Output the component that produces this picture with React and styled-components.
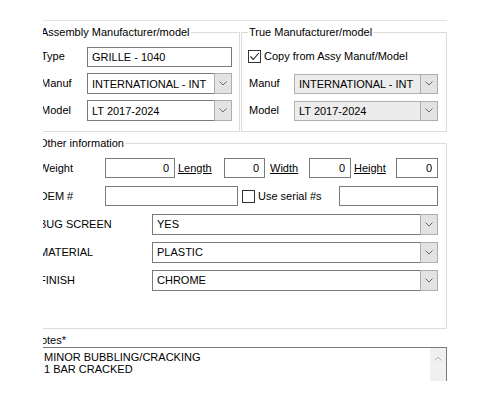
import React from "react";
import styled, { createGlobalStyle } from "styled-components";

const GlobalStyle = createGlobalStyle`
  html, body { margin: 0; padding: 0; background: #fff; }
  body {
    font-family: "Liberation Sans", Arial, sans-serif;
    font-size: 11px;
    color: #000;
  }
  *, *::before, *::after { box-sizing: border-box; }
`;

const Page = styled.div`
  width: 500px;
  height: 400px;
  padding: 20px 0 0 43px;
  background: #fff;
  overflow: hidden;
`;

const Frame = styled.div`
  width: 404px;
  height: 361px;
  overflow: hidden;
  border-top: 1px solid #e3e3e3;
`;

const Content = styled.div`
  margin-left: -5px;
  width: 409px;
`;

const GroupRow = styled.div`
  display: flex;
  gap: 1px;
  margin-top: 5px;
`;

const Group = styled.fieldset`
  margin: ${(p) => p.$mt || 0}px 0 0 0;
  padding: 4px 0 ${(p) => p.$pb}px ${(p) => p.$pl}px;
  border: 1px solid #dcdcdc;
  width: ${(p) => p.$w}px;
  min-width: 0;
`;

const Legend = styled.legend`
  margin-left: ${(p) => p.$ml}px;
  padding: 0 1px;
  line-height: 13px;
  white-space: nowrap;
`;

const Row = styled.div`
  display: flex;
  align-items: center;
  height: ${(p) => p.$h}px;
`;

const Label = styled.span`
  flex: none;
  width: ${(p) => p.$w}px;
  margin-left: ${(p) => p.$ml || 0}px;
  line-height: 13px;
  white-space: nowrap;
`;

const LinkLabel = styled(Label)`
  text-decoration: underline;
`;

const TextBox = styled.div`
  flex: none;
  display: flex;
  align-items: center;
  justify-content: ${(p) => (p.$right ? "flex-end" : "flex-start")};
  width: ${(p) => p.$w}px;
  height: 20px;
  padding: 0 5px 0 4px;
  border: 1px solid #7a7a7a;
  background: #fff;
  white-space: nowrap;
`;

const ComboWrap = styled.div`
  flex: none;
  display: flex;
  width: ${(p) => p.$w}px;
  height: ${(p) => (p.$disabled ? 20 : 21)}px;
`;

const ComboField = styled.div`
  flex: 1;
  display: flex;
  align-items: center;
  padding-left: 4px;
  border: 1px solid ${(p) => (p.$disabled ? "#b0b0b0" : "#7a7a7a")};
  border-right: none;
  background: ${(p) => (p.$disabled ? "#ececec" : "#fff")};
  white-space: nowrap;
  overflow: hidden;
`;

const ComboButton = styled.div`
  flex: none;
  width: 18px;
  display: flex;
  align-items: center;
  justify-content: center;
  border: 1px solid #adadad;
  background: #e3e3e3;
`;

const CheckBox = styled.span`
  flex: none;
  display: inline-flex;
  align-items: center;
  justify-content: center;
  width: 13px;
  height: 13px;
  margin-left: ${(p) => p.$ml || 0}px;
  border: 1px solid #333;
  background: #fff;
`;

const NotesLabel = styled.div`
  margin: 5px 0 0 -5px;
  line-height: 13px;
`;

const NotesBox = styled.div`
  display: flex;
  margin-left: -5px;
  width: 414px;
  height: 60px;
  border: 1px solid #7a7a7a;
  border-left-color: #7a7a7a;
`;

const NotesText = styled.div`
  flex: 1;
  padding: 3px 0 0 10px;
  line-height: 12px;
  white-space: pre;
`;

const ScrollTrack = styled.div`
  flex: none;
  width: 16px;
  background: #f0f0f0;
`;

const ScrollArrow = styled.div`
  height: 20px;
  display: flex;
  align-items: center;
  justify-content: center;
`;

const Chevron = ({ up, color = "#6a6a6a" }) => (
  <svg width="8" height="5" viewBox="0 0 8 5">
    <path
      d={up ? "M0.5 4.5 L4 1 L7.5 4.5" : "M0.5 0.5 L4 4 L7.5 0.5"}
      stroke={color}
      strokeWidth="1"
      fill="none"
    />
  </svg>
);

const Check = () => (
  <svg width="11" height="11" viewBox="0 0 11 11">
    <path d="M1.5 5.5 L4.3 8.5 L9.8 2" stroke="#222" strokeWidth="1.1" fill="none" />
  </svg>
);

const Combo = ({ w, value, disabled }) => (
  <ComboWrap $w={w} $disabled={disabled}>
    <ComboField $disabled={disabled}>{value}</ComboField>
    <ComboButton>
      <Chevron />
    </ComboButton>
  </ComboWrap>
);

export default function App() {
  return (
    <>
      <GlobalStyle />
      <Page>
        <Frame>
          <Content>
            <GroupRow>
              <Group $w={202} $pl={2} $pb={7}>
                <Legend $ml={-1}>Assembly Manufacturer/model</Legend>
                <Row $h={27}>
                  <Label $w={46}>Type</Label>
                  <TextBox $w={145}>GRILLE - 1040</TextBox>
                </Row>
                <Row $h={27}>
                  <Label $w={46}>Manuf</Label>
                  <Combo w={145} value="INTERNATIONAL - INT" />
                </Row>
                <Row $h={27}>
                  <Label $w={46}>Model</Label>
                  <Combo w={145} value="LT 2017-2024" />
                </Row>
              </Group>
              <Group $w={206} $pl={6} $pb={7}>
                <Legend $ml={0}>True Manufacturer/model</Legend>
                <Row $h={27}>
                  <CheckBox>
                    <Check />
                  </CheckBox>
                  <Label $ml={3}>Copy from Assy Manuf/Model</Label>
                </Row>
                <Row $h={27}>
                  <Label $w={45} $ml={1}>Manuf</Label>
                  <Combo w={144} value="INTERNATIONAL - INT" disabled />
                </Row>
                <Row $h={27}>
                  <Label $w={45} $ml={1}>Model</Label>
                  <Combo w={144} value="LT 2017-2024" disabled />
                </Row>
              </Group>
            </GroupRow>

            <Group $w={409} $pl={0} $pb={34} $mt={5}>
              <Legend $ml={-1}>Other information</Legend>
              <Row $h={28}>
                <Label $w={66}>Weight</Label>
                <TextBox $w={70} $right>0</TextBox>
                <LinkLabel $w={46} $ml={3}>Length</LinkLabel>
                <TextBox $w={41} $right>0</TextBox>
                <LinkLabel $w={39} $ml={5}>Width</LinkLabel>
                <TextBox $w={42} $right>0</TextBox>
                <LinkLabel $w={42} $ml={3}>Height</LinkLabel>
                <TextBox $w={42} $right>0</TextBox>
              </Row>
              <Row $h={28}>
                <Label $w={66}>OEM #</Label>
                <TextBox $w={133} />
                <CheckBox $ml={4} />
                <Label $w={81} $ml={3}>Use serial #s</Label>
                <TextBox $w={99} />
              </Row>
              <Row $h={28}>
                <Label $w={113}>BUG SCREEN</Label>
                <Combo w={286} value="YES" />
              </Row>
              <Row $h={28}>
                <Label $w={113}>MATERIAL</Label>
                <Combo w={286} value="PLASTIC" />
              </Row>
              <Row $h={28}>
                <Label $w={113}>FINISH</Label>
                <Combo w={286} value="CHROME" />
              </Row>
            </Group>

            <NotesLabel>Notes*</NotesLabel>
            <NotesBox>
              <NotesText>{"MINOR BUBBLING/CRACKING\n1 BAR CRACKED"}</NotesText>
              <ScrollTrack>
                <ScrollArrow>
                  <Chevron up color="#b4b4b4" />
                </ScrollArrow>
              </ScrollTrack>
            </NotesBox>
          </Content>
        </Frame>
      </Page>
    </>
  );
}
